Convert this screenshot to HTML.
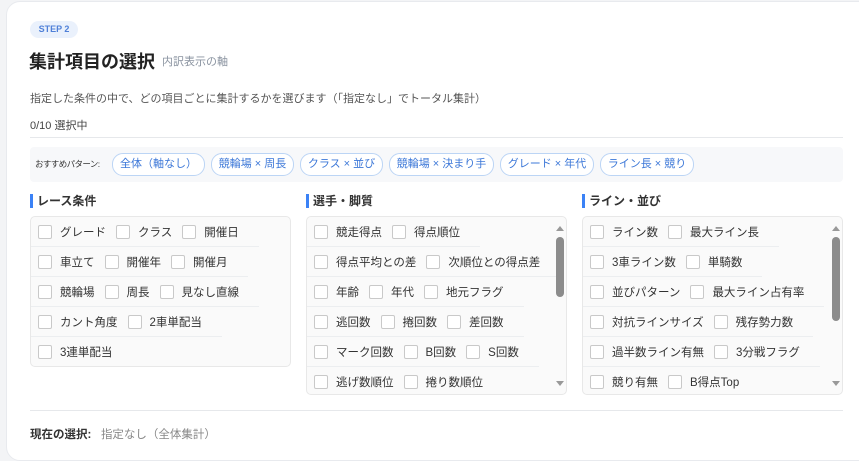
<!DOCTYPE html>
<html><head><meta charset="utf-8"><style>
*{box-sizing:border-box;margin:0;padding:0}
body{width:859px;height:446px;overflow:hidden;background:#f3f4f6;font-family:"Liberation Sans","Noto Sans CJK JP",sans-serif;color:#333}
.card{position:absolute;left:6px;top:1px;width:870px;height:460px;background:#fff;border-radius:14px;border:1px solid #e8eaee}
.abs{position:absolute}
.pill{left:30px;top:21px;width:48px;height:17px;border-radius:9px;background:#eaf1fc;color:#4f80d8;font-size:9px;font-weight:bold;line-height:17px;text-align:center}
.title{left:29px;top:48px;font-size:18px;font-weight:bold;color:#222}
.sub{left:162px;top:53px;font-size:11px;color:#8a93a0}
.desc{left:30px;top:90px;font-size:11px;color:#555}
.cnt{left:30px;top:117px;font-size:11px;color:#444}
.hr{height:1px;background:#e6e8eb}
.rec{left:30px;top:147px;width:813px;height:35px;background:#f7f8fa;border-radius:4px}
.rec span.l{position:absolute;left:5px;top:11px;font-size:8.5px;letter-spacing:-0.6px;color:#333}
.chip{position:absolute;top:6px;height:23px;border:1px solid #bcd5f5;border-radius:11px;background:#fff;color:#3d78d8;font-size:11px;line-height:21px;text-align:center}
.sh{font-size:12px;font-weight:bold;color:#333;border-left:3px solid #3b82f6;padding-left:4px;line-height:14px}
.box{position:absolute;top:216px;border:1px solid #e8e8e8;border-radius:5px;background:#fafafa;overflow:hidden}
.row{height:30px;display:flex;align-items:center;padding-left:7px;padding-right:10px;width:fit-content;border-bottom:1px solid #eceef0}
.row:last-child{border-bottom:none}
.it{display:flex;align-items:center;margin-right:10px;font-size:11.5px;color:#333;white-space:nowrap}
.cb{width:14px;height:14px;border:1px solid #c9c9c9;border-radius:2px;background:#fff;margin-right:8px}
.sb{position:absolute;right:2px;width:8px;background:#8c8c8c;border-radius:4px}
.ar{position:absolute;right:2px;width:0;height:0;border-left:4px solid transparent;border-right:4px solid transparent}
</style></head><body>
<div class="card"></div>
<div class="abs pill">STEP 2</div>
<div class="abs title">集計項目の選択</div>
<div class="abs sub">内訳表示の軸</div>
<div class="abs desc">指定した条件の中で、どの項目ごとに集計するかを選びます（「指定なし」でトータル集計）</div>
<div class="abs cnt">0/10 選択中</div>
<div class="abs hr" style="left:30px;top:137px;width:813px"></div>
<div class="abs rec"><span class="l">おすすめパターン:</span>
<div class="chip" style="left:82px;width:93px">全体（軸なし）</div>
<div class="chip" style="left:181px;width:83px">競輪場 × 周長</div>
<div class="chip" style="left:270px;width:83px">クラス × 並び</div>
<div class="chip" style="left:359px;width:105px">競輪場 × 決まり手</div>
<div class="chip" style="left:470px;width:94px">グレード × 年代</div>
<div class="chip" style="left:570px;width:94px">ライン長 × 競り</div>
</div>
<div class="abs sh" style="left:30px;top:194px">レース条件</div>
<div class="abs sh" style="left:306px;top:194px">選手・脚質</div>
<div class="abs sh" style="left:582px;top:194px">ライン・並び</div>
<div class="box" style="left:30px;width:261px;height:151px">
<div class="row"><div class="it"><div class="cb"></div>グレード</div><div class="it"><div class="cb"></div>クラス</div><div class="it"><div class="cb"></div>開催日</div></div>
<div class="row"><div class="it"><div class="cb"></div>車立て</div><div class="it"><div class="cb"></div>開催年</div><div class="it"><div class="cb"></div>開催月</div></div>
<div class="row"><div class="it"><div class="cb"></div>競輪場</div><div class="it"><div class="cb"></div>周長</div><div class="it"><div class="cb"></div>見なし直線</div></div>
<div class="row"><div class="it"><div class="cb"></div>カント角度</div><div class="it"><div class="cb"></div>2車単配当</div></div>
<div class="row"><div class="it"><div class="cb"></div>3連単配当</div></div>
</div>
<div class="box" style="left:306px;width:261px;height:179px">
<div class="row"><div class="it"><div class="cb"></div>競走得点</div><div class="it"><div class="cb"></div>得点順位</div></div>
<div class="row"><div class="it"><div class="cb"></div>得点平均との差</div><div class="it"><div class="cb"></div>次順位との得点差</div></div>
<div class="row"><div class="it"><div class="cb"></div>年齢</div><div class="it"><div class="cb"></div>年代</div><div class="it"><div class="cb"></div>地元フラグ</div></div>
<div class="row"><div class="it"><div class="cb"></div>逃回数</div><div class="it"><div class="cb"></div>捲回数</div><div class="it"><div class="cb"></div>差回数</div></div>
<div class="row"><div class="it"><div class="cb"></div>マーク回数</div><div class="it"><div class="cb"></div>B回数</div><div class="it"><div class="cb"></div>S回数</div></div>
<div class="row"><div class="it"><div class="cb"></div>逃げ数順位</div><div class="it"><div class="cb"></div>捲り数順位</div></div>
<div class="ar" style="top:9px;border-bottom:5px solid #999"></div>
<div class="sb" style="top:20px;height:60px"></div>
<div class="ar" style="bottom:8px;border-top:5px solid #999"></div>
</div>
<div class="box" style="left:582px;width:261px;height:179px">
<div class="row"><div class="it"><div class="cb"></div>ライン数</div><div class="it"><div class="cb"></div>最大ライン長</div></div>
<div class="row"><div class="it"><div class="cb"></div>3車ライン数</div><div class="it"><div class="cb"></div>単騎数</div></div>
<div class="row"><div class="it"><div class="cb"></div>並びパターン</div><div class="it"><div class="cb"></div>最大ライン占有率</div></div>
<div class="row"><div class="it"><div class="cb"></div>対抗ラインサイズ</div><div class="it"><div class="cb"></div>残存勢力数</div></div>
<div class="row"><div class="it"><div class="cb"></div>過半数ライン有無</div><div class="it"><div class="cb"></div>3分戦フラグ</div></div>
<div class="row"><div class="it"><div class="cb"></div>競り有無</div><div class="it"><div class="cb"></div>B得点Top</div></div>
<div class="ar" style="top:9px;border-bottom:5px solid #999"></div>
<div class="sb" style="top:20px;height:84px"></div>
<div class="ar" style="bottom:8px;border-top:5px solid #999"></div>
</div>
<div class="abs hr" style="left:30px;top:410px;width:813px"></div>
<div class="abs" style="left:30px;top:426px;font-size:11.5px"><b>現在の選択:</b>&nbsp;&nbsp;&nbsp;<span style="color:#888">指定なし（全体集計）</span></div>
</body></html>
